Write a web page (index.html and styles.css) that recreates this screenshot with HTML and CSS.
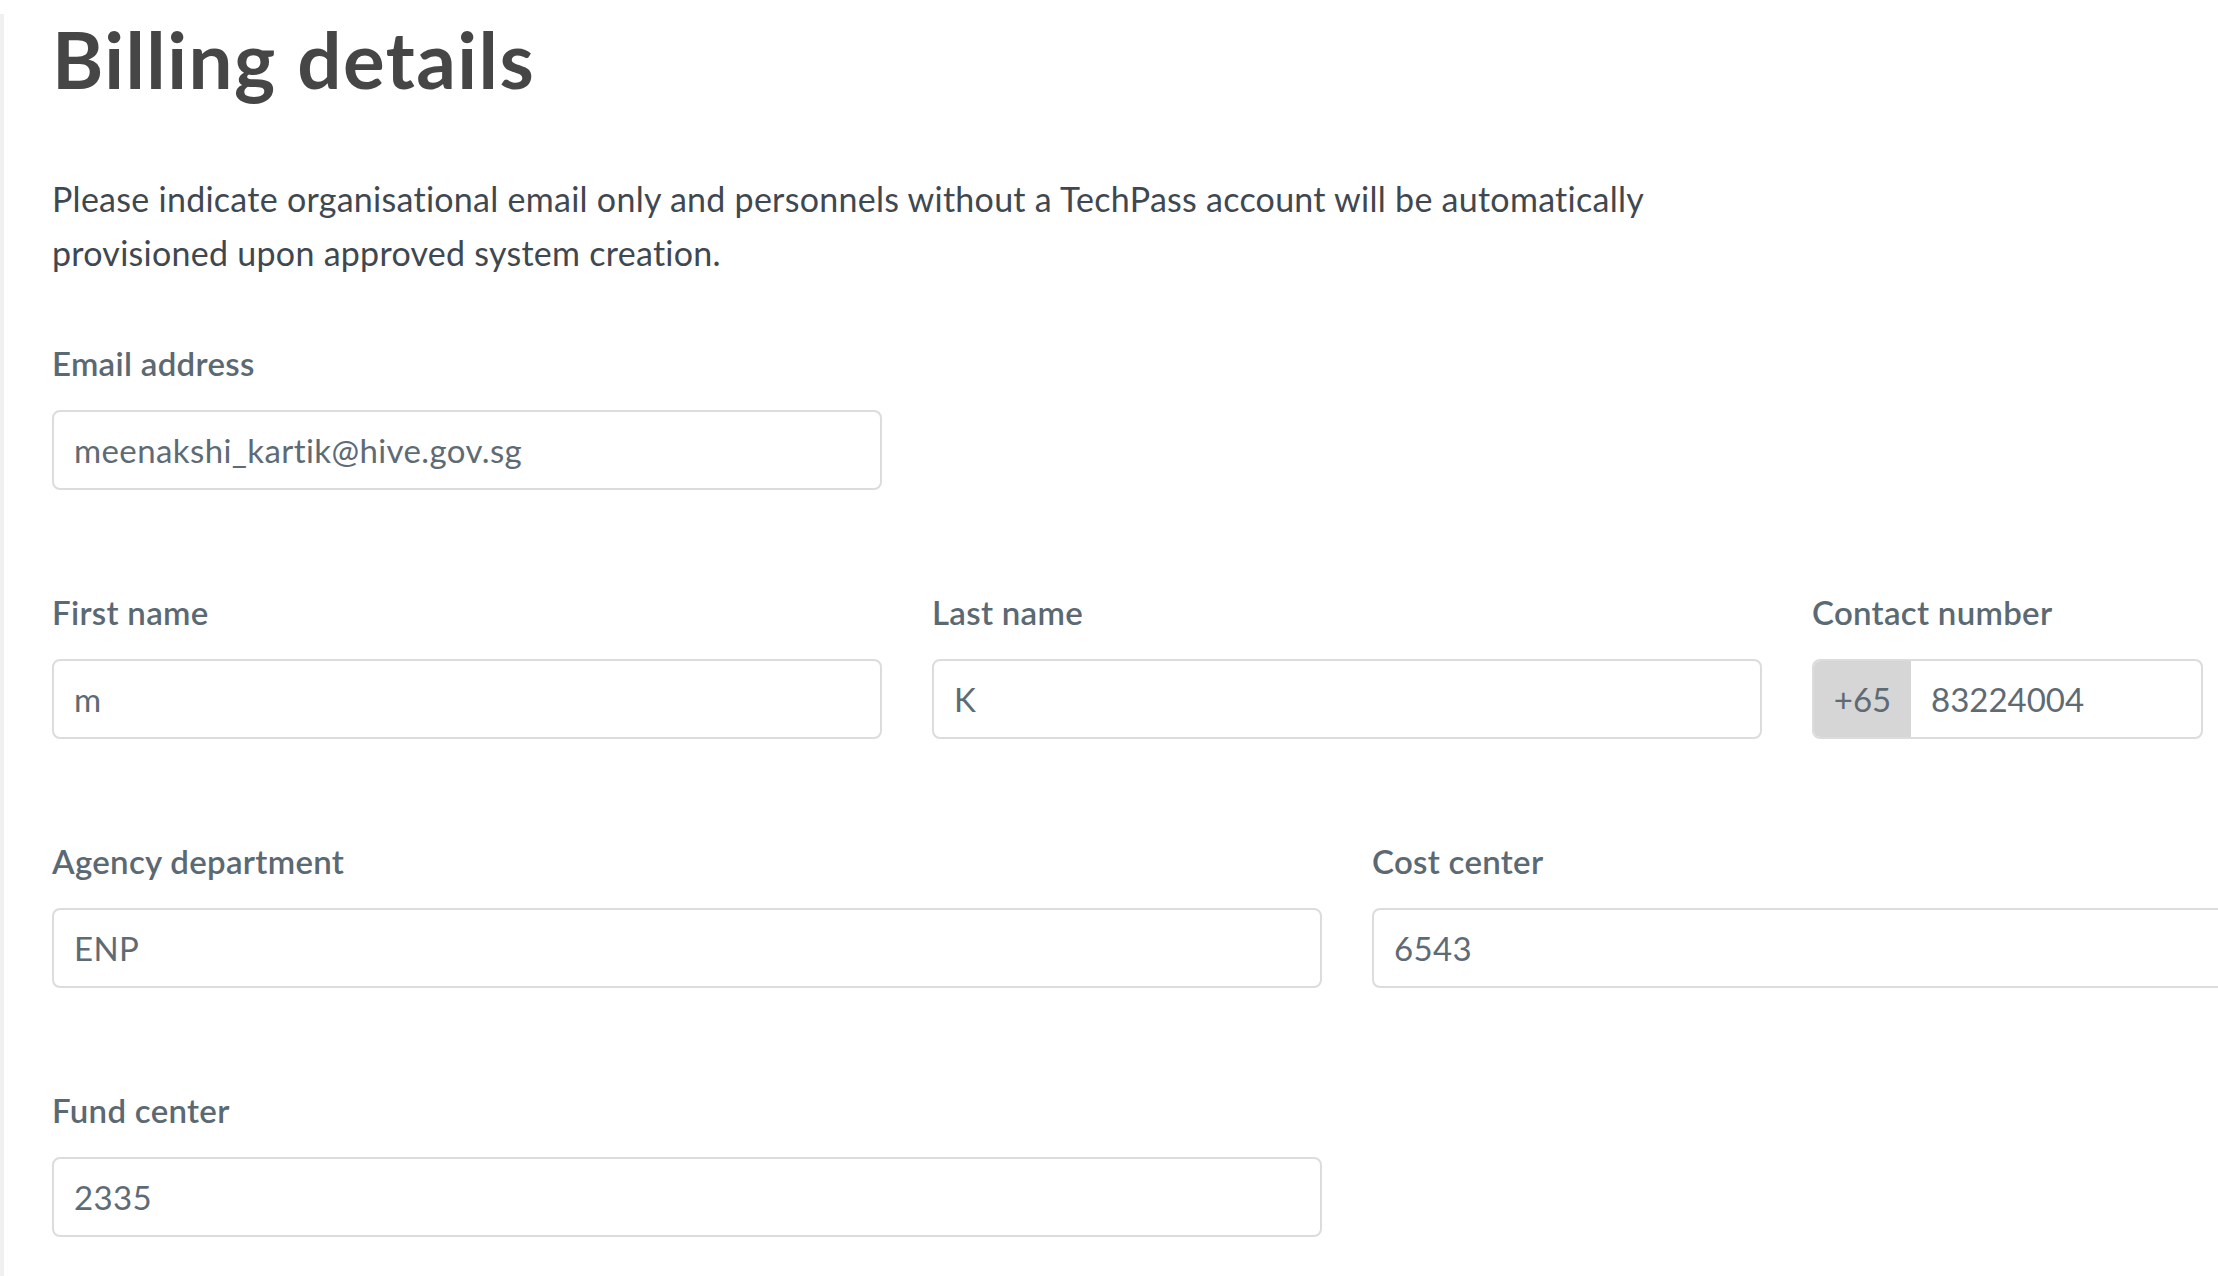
FILE: index.html
```html
<!DOCTYPE html>
<html lang="en">
<head>
<meta charset="utf-8">
<title>Billing details</title>
<link rel="stylesheet" href="styles.css">
</head>
<body>
<div class="frame">
  <main class="page">
    <h1 class="title">Billing details</h1>
    <p class="intro">Please indicate organisational email only and personnels without a TechPass account will be automatically provisioned upon approved system creation.</p>

    <div class="form">
      <div class="row cols-3">
        <div class="field">
          <label class="label">Email address</label>
          <div class="input">meenakshi_kartik@hive.gov.sg</div>
        </div>
      </div>

      <div class="row cols-3">
        <div class="field">
          <label class="label">First name</label>
          <div class="input">m</div>
        </div>
        <div class="field">
          <label class="label">Last name</label>
          <div class="input">K</div>
        </div>
        <div class="field">
          <label class="label">Contact number</label>
          <div class="phone">
            <span class="prefix">+65</span>
            <span class="phone-value">83224004</span>
          </div>
        </div>
      </div>

      <div class="row cols-2">
        <div class="field">
          <label class="label">Agency department</label>
          <div class="input">ENP</div>
        </div>
        <div class="field">
          <label class="label">Cost center</label>
          <div class="input">6543</div>
        </div>
      </div>

      <div class="row cols-2">
        <div class="field">
          <label class="label">Fund center</label>
          <div class="input">2335</div>
        </div>
      </div>
    </div>
  </main>
</div>
</body>
</html>
```

FILE: styles.css
```css
html, body {
  margin: 0;
  padding: 0;
  background: #ffffff;
}

body {
  overflow: hidden;
  font-family: "Lato", "Open Sans", "Liberation Sans", sans-serif;
}

.frame {
  border-left: 4px solid #f0f0f0;
  min-height: 1276px;
  box-sizing: border-box;
}

.page {
  padding-left: 48px;
  width: 2590px;
}

.title {
  margin: 14px 0 0;
  font-size: 78px;
  line-height: 91px;
  font-weight: 700;
  color: #464646;
  letter-spacing: 1.5px;
}

.intro {
  margin: 67px 0 0;
  max-width: 1720px;
  font-size: 34px;
  line-height: 54px;
  letter-spacing: 0.27px;
  color: #3f4850;
}

.form {
  margin-top: 65px;
  display: flex;
  flex-direction: column;
  gap: 104px;
}

.row {
  display: grid;
  column-gap: 50px;
}

.cols-3 {
  grid-template-columns: repeat(3, 1fr);
}

.cols-2 {
  grid-template-columns: repeat(2, 1fr);
}

.field {
  display: flex;
  flex-direction: column;
  gap: 29px;
}

.label {
  font-size: 33px;
  line-height: 36px;
  font-weight: 600;
  letter-spacing: 0.3px;
  color: #5b6973;
}

.input {
  box-sizing: border-box;
  height: 80px;
  border: 2px solid #dcdcdc;
  border-radius: 8px;
  padding: 0 20px;
  display: flex;
  align-items: center;
  font-size: 33px;
  letter-spacing: 0.4px;
  color: #5e6b74;
}

.phone {
  box-sizing: border-box;
  width: 391px;
  height: 80px;
  border: 2px solid #dcdcdc;
  border-radius: 8px;
  display: flex;
  overflow: hidden;
  font-size: 33px;
  color: #5e6b74;
}

.prefix {
  width: 97px;
  background: #d6d6d6;
  display: flex;
  align-items: center;
  justify-content: center;
}

.phone-value {
  flex: 1;
  padding: 0 20px;
  display: flex;
  align-items: center;
}
```
